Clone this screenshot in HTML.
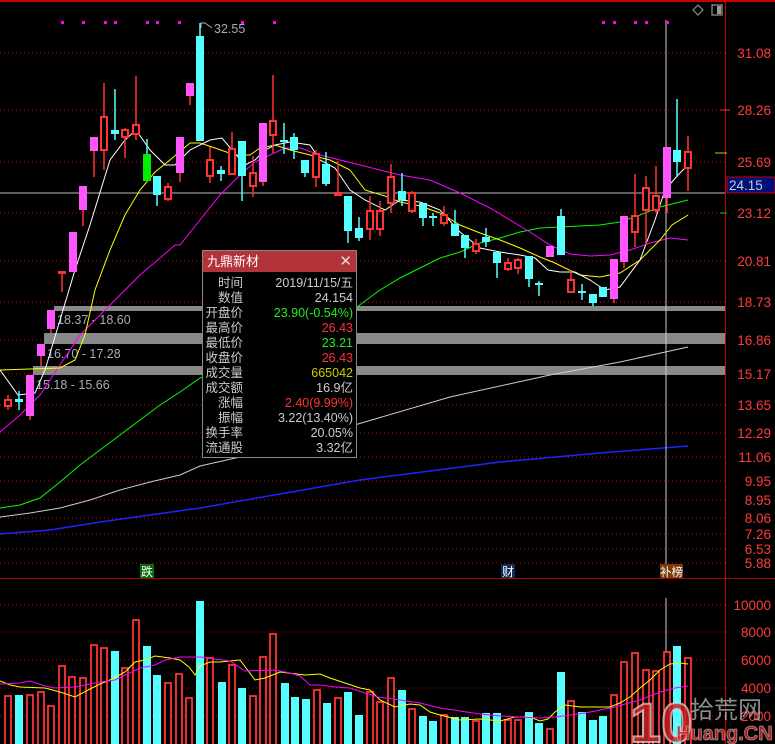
<!DOCTYPE html>
<html><head><meta charset="utf-8"><style>
html,body{margin:0;padding:0;background:#000;}
body{width:775px;height:744px;overflow:hidden;position:relative;font-family:"Liberation Sans","Noto Sans CJK SC",sans-serif;}
svg{position:absolute;left:0;top:0}
.tip{position:absolute;left:202px;top:250px;width:153px;height:206px;border:1px solid #888;background:#000;}
.tip .hd{height:21px;background:#b3333a;color:#fff;font-size:13px;line-height:21px;padding-left:4px;position:relative}
.tip .hd span{position:absolute;right:4px;top:0;color:#ddd;font-size:15px}
.row{height:15px;line-height:15px;font-size:12.5px;position:relative;color:#ccc}
.row .l{position:absolute;left:0;width:40px;text-align:right;}
.row .v{position:absolute;right:3px;}
</style></head><body>
<svg width="775" height="744" xmlns="http://www.w3.org/2000/svg">
<rect x="0" y="0" width="775" height="2" fill="#c00"/>
<g stroke="#c00" stroke-width="1" stroke-dasharray="1,3">
<line x1="0" y1="53" x2="725" y2="53"/><line x1="0" y1="110" x2="725" y2="110"/><line x1="0" y1="162" x2="725" y2="162"/><line x1="0" y1="213" x2="725" y2="213"/><line x1="0" y1="261" x2="725" y2="261"/><line x1="0" y1="302" x2="725" y2="302"/><line x1="0" y1="340" x2="725" y2="340"/><line x1="0" y1="374" x2="725" y2="374"/><line x1="0" y1="405" x2="725" y2="405"/><line x1="0" y1="433" x2="725" y2="433"/><line x1="0" y1="457" x2="725" y2="457"/><line x1="0" y1="481" x2="725" y2="481"/><line x1="0" y1="500" x2="725" y2="500"/><line x1="0" y1="518" x2="725" y2="518"/><line x1="0" y1="534" x2="725" y2="534"/><line x1="0" y1="549" x2="725" y2="549"/><line x1="0" y1="563" x2="725" y2="563"/>
<line x1="0" y1="605" x2="725" y2="605"/><line x1="0" y1="632" x2="725" y2="632"/><line x1="0" y1="660" x2="725" y2="660"/><line x1="0" y1="688" x2="725" y2="688"/><line x1="0" y1="716" x2="725" y2="716"/>
</g>
<rect x="54" y="306" width="671" height="5" fill="#888"/>
<rect x="44" y="333" width="681" height="11" fill="#888"/>
<rect x="33" y="366" width="692" height="9" fill="#888"/>
<g font-size="12.5" fill="#aab">
<text x="57" y="324">18.37 - 18.60</text>
<text x="47" y="358">16.70 - 17.28</text>
<text x="36" y="389">15.18 - 15.66</text>
</g>
<polyline fill="none" stroke="#0f0" stroke-width="1" points="0,508 20,505 40,498 60,482 80,465 100,450 120,435 140,420 160,405 180,392 200,378 260,350 357,307 380,290 400,278 420,268 440,258 460,252 480,243 500,238 520,232 540,228 560,227 580,226 600,225 620,222 640,215 660,207 688,200"/>
<polyline fill="none" stroke="#ccc" stroke-width="1" points="0,517 30,513 60,508 90,500 120,490 150,482 180,475 200,466 280,448 358,424 450,397 550,375 620,362 688,347"/>
<polyline fill="none" stroke="#22f" stroke-width="1.5" points="0,534 50,530 100,522 150,515 200,508 360,480 500,462 600,453 688,446"/>
<line x1="0" y1="193" x2="725" y2="193" stroke="#bbb" stroke-width="1"/>
<polyline fill="none" stroke="#f0f" stroke-width="1" points="0,432 20,415 40,395 60,365 80,335 100,315 120,295 140,275 160,258 175,245 180,245 200,220 220,195 240,175 255,162 270,155 285,148 300,148 320,155 340,160 360,165 400,175 430,180 460,193 490,208 510,220 530,232 550,245 570,254 590,256 610,255 630,250 650,243 670,238 688,240"/>
<polyline fill="none" stroke="#ff0" stroke-width="1" points="0,370 60,368 75,360 85,335 95,290 110,250 125,215 140,190 155,172 170,160 190,143 200,143 215,148 235,155 250,155 260,148 275,145 290,150 310,155 330,160 350,170 365,190 385,196 400,202 420,206 440,213 460,225 480,233 500,240 520,248 540,257 555,263 565,268 580,275 600,277 620,273 640,260 660,240 672,225 688,215"/>
<polyline fill="none" stroke="#fff" stroke-width="1" points="0,370 18,395 35,393 45,370 60,320 75,270 90,225 110,160 125,140 136,130 150,150 165,165 175,165 190,150 210,140 222,138 232,150 245,165 255,160 265,150 275,145 290,142 310,145 320,160 335,168 350,190 365,200 385,210 400,200 420,202 440,210 460,232 480,248 500,252 520,255 535,258 548,270 560,272 575,272 590,280 605,290 620,287 640,260 655,220 665,190 678,175 688,165"/>
<line x1="666" y1="20" x2="666" y2="578" stroke="#ccc"/>
<line x1="666" y1="598" x2="666" y2="744" stroke="#ccc"/>
<g stroke-width="1.5">
<g stroke="#f33">
<line x1="8" y1="395" x2="8" y2="410"/><line x1="62" y1="272" x2="62" y2="292"/><line x1="104" y1="83" x2="104" y2="170"/><line x1="125" y1="128" x2="125" y2="158"/><line x1="136" y1="76" x2="136" y2="140"/><line x1="168" y1="183" x2="168" y2="201"/><line x1="210" y1="147" x2="210" y2="183"/><line x1="232" y1="132" x2="232" y2="175"/><line x1="253" y1="156" x2="253" y2="197"/><line x1="273" y1="75" x2="273" y2="153"/><line x1="316" y1="150" x2="316" y2="187"/><line x1="338" y1="161" x2="338" y2="196"/><line x1="370" y1="196" x2="370" y2="240"/><line x1="380" y1="201" x2="380" y2="236"/><line x1="391" y1="164" x2="391" y2="213"/><line x1="412" y1="191" x2="412" y2="213"/><line x1="444" y1="206" x2="444" y2="226"/><line x1="476" y1="239" x2="476" y2="254"/><line x1="508" y1="258" x2="508" y2="271"/><line x1="518" y1="258" x2="518" y2="274"/><line x1="571" y1="270" x2="571" y2="293"/><line x1="635" y1="174" x2="635" y2="247"/><line x1="646" y1="176" x2="646" y2="245"/><line x1="656" y1="166" x2="656" y2="213"/><line x1="688" y1="136" x2="688" y2="191"/>
<line x1="30" y1="375" x2="30" y2="420"/><line x1="41" y1="344" x2="41" y2="366"/><line x1="51" y1="310" x2="51" y2="333"/><line x1="83" y1="186" x2="83" y2="226"/><line x1="94" y1="137" x2="94" y2="177"/><line x1="180" y1="137" x2="180" y2="182"/><line x1="190" y1="83" x2="190" y2="105"/><line x1="263" y1="123" x2="263" y2="186"/><line x1="614" y1="259" x2="614" y2="303"/><line x1="624" y1="216" x2="624" y2="268"/><line x1="667" y1="147" x2="667" y2="213"/>
</g>
<g stroke="#5ff">
<line x1="19" y1="391" x2="19" y2="410"/><line x1="115" y1="89" x2="115" y2="140"/><line x1="147" y1="139" x2="147" y2="181"/><line x1="157" y1="176" x2="157" y2="206"/><line x1="200" y1="23" x2="200" y2="141"/><line x1="221" y1="166" x2="221" y2="181"/><line x1="242" y1="141" x2="242" y2="201"/><line x1="284" y1="123" x2="284" y2="154"/><line x1="294" y1="133" x2="294" y2="159"/><line x1="305" y1="160" x2="305" y2="177"/><line x1="326" y1="152" x2="326" y2="186"/><line x1="348" y1="196" x2="348" y2="243"/><line x1="359" y1="217" x2="359" y2="241"/><line x1="402" y1="173" x2="402" y2="206"/><line x1="423" y1="203" x2="423" y2="226"/><line x1="433" y1="213" x2="433" y2="226"/><line x1="455" y1="210" x2="455" y2="236"/><line x1="465" y1="235" x2="465" y2="258"/><line x1="486" y1="228" x2="486" y2="247"/><line x1="497" y1="252" x2="497" y2="278"/><line x1="529" y1="256" x2="529" y2="287"/><line x1="539" y1="281" x2="539" y2="296"/><line x1="561" y1="209" x2="561" y2="255"/><line x1="582" y1="284" x2="582" y2="300"/><line x1="593" y1="294" x2="593" y2="306"/><line x1="677" y1="99" x2="677" y2="177"/>
</g>
</g>
<g fill="#000" stroke="#f33" stroke-width="2">
<rect x="5" y="400" width="6" height="6"/><rect x="101" y="117" width="6" height="33"/><rect x="122" y="130" width="6" height="7"/><rect x="133" y="125" width="6" height="9"/><rect x="165" y="187" width="6" height="12"/><rect x="207" y="160" width="6" height="16"/><rect x="229" y="149" width="6" height="25"/><rect x="250" y="173" width="6" height="13"/><rect x="270" y="121" width="6" height="14"/><rect x="313" y="154" width="6" height="23"/><rect x="367" y="211" width="6" height="18"/><rect x="377" y="211" width="6" height="18"/><rect x="388" y="177" width="6" height="26"/><rect x="409" y="193" width="6" height="18"/><rect x="441" y="215" width="6" height="8"/><rect x="473" y="244" width="6" height="7"/><rect x="505" y="263" width="6" height="6"/><rect x="515" y="260" width="6" height="8"/><rect x="568" y="280" width="6" height="12"/><rect x="632" y="216" width="6" height="16"/><rect x="643" y="188" width="6" height="22"/><rect x="653" y="196" width="6" height="14"/><rect x="685" y="152" width="6" height="16"/>
</g>
<g fill="#f33"><rect x="58" y="271" width="8" height="3"/><rect x="334" y="192" width="8" height="4"/></g>
<g fill="#f5f">
<rect x="26" y="375" width="8" height="41"/><rect x="37" y="344" width="8" height="12"/><rect x="47" y="310" width="8" height="19"/><rect x="69" y="232" width="8" height="40"/><rect x="79" y="186" width="8" height="24"/><rect x="90" y="137" width="8" height="14"/><rect x="176" y="137" width="8" height="36"/><rect x="186" y="83" width="8" height="13"/><rect x="259" y="123" width="8" height="59"/><rect x="546" y="246" width="8" height="11"/><rect x="610" y="259" width="8" height="40"/><rect x="620" y="216" width="8" height="46"/><rect x="663" y="147" width="8" height="51"/>
</g>
<rect x="143" y="154" width="8" height="27" fill="#0e0"/>
<g fill="#5ff">
<rect x="15" y="399" width="8" height="3"/><rect x="111" y="130" width="8" height="4"/><rect x="153" y="176" width="8" height="19"/><rect x="196" y="36" width="8" height="105"/><rect x="217" y="170" width="8" height="4"/><rect x="238" y="141" width="8" height="35"/><rect x="280" y="140" width="8" height="2"/><rect x="290" y="137" width="8" height="13"/><rect x="301" y="160" width="8" height="13"/><rect x="322" y="164" width="8" height="20"/><rect x="344" y="196" width="8" height="35"/><rect x="355" y="228" width="8" height="10"/><rect x="398" y="191" width="8" height="9"/><rect x="419" y="203" width="8" height="15"/><rect x="429" y="216" width="8" height="2"/><rect x="451" y="224" width="8" height="12"/><rect x="461" y="235" width="8" height="13"/><rect x="482" y="237" width="8" height="5"/><rect x="493" y="252" width="8" height="11"/><rect x="525" y="256" width="8" height="23"/><rect x="535" y="283" width="8" height="2"/><rect x="557" y="216" width="8" height="39"/><rect x="578" y="291" width="8" height="2"/><rect x="589" y="294" width="8" height="9"/><rect x="599" y="287" width="8" height="10"/><rect x="673" y="150" width="8" height="12"/>
</g>
<polyline points="201,28 201,23 205,23 212,28" fill="none" stroke="#aab" stroke-width="1"/>
<text x="214" y="33" font-size="12.5" fill="#aab">32.55</text>
<g fill="#f0f"><rect x="61" y="21" width="3" height="3"/><rect x="82" y="21" width="3" height="3"/><rect x="104" y="21" width="3" height="3"/><rect x="114" y="21" width="3" height="3"/><rect x="146" y="21" width="3" height="3"/><rect x="156" y="21" width="3" height="3"/><rect x="178" y="21" width="3" height="3"/><rect x="241" y="21" width="3" height="3"/><rect x="273" y="21" width="3" height="3"/><rect x="602" y="21" width="3" height="3"/><rect x="613" y="21" width="3" height="3"/><rect x="634" y="21" width="3" height="3"/><rect x="645" y="21" width="3" height="3"/><rect x="666" y="21" width="3" height="3"/></g>
<polygon points="698,5 703,10 698,15 693,10" fill="none" stroke="#999"/>
<rect x="712" y="5" width="10" height="10" fill="none" stroke="#999" stroke-width="1.2"/><rect x="717" y="6" width="4" height="8" fill="#999"/>
<line x1="725.5" y1="0" x2="725.5" y2="744" stroke="#c00"/>
<line x1="0" y1="578.5" x2="775" y2="578.5" stroke="#a00"/>
<g stroke="#f33"><line x1="720" y1="110" x2="730" y2="110"/><line x1="715" y1="153" x2="727" y2="153" stroke="#cc0"/><line x1="720" y1="213" x2="727" y2="213" stroke="#0c0"/></g>
<g font-size="13.5" fill="#ff3b3b" text-anchor="end">
<text x="771" y="58">31.08</text><text x="771" y="115">28.26</text><text x="771" y="167">25.69</text><text x="771" y="218">23.12</text><text x="771" y="266">20.81</text><text x="771" y="307">18.73</text><text x="771" y="345">16.86</text><text x="771" y="379">15.17</text><text x="771" y="410">13.65</text><text x="771" y="438">12.29</text><text x="771" y="462">11.06</text><text x="771" y="486">9.95</text><text x="771" y="505">8.95</text><text x="771" y="523">8.06</text><text x="771" y="539">7.26</text><text x="771" y="554">6.53</text><text x="771" y="568">5.88</text>
<text x="771" y="610">10000</text><text x="771" y="637">8000</text><text x="771" y="665">6000</text><text x="771" y="693">4000</text><text x="771" y="721">2000</text>
</g>
<rect x="727" y="177" width="48" height="16" fill="#00107a" stroke="#c00"/>
<text x="729" y="190" font-size="13.5" fill="#ccc">24.15</text>
<rect x="140" y="564" width="14" height="14" fill="#0a6a0a"/><text x="141" y="576" font-size="12" fill="#fff">跌</text>
<rect x="501" y="564" width="14" height="14" fill="#0c2a5a"/><text x="502" y="576" font-size="12" fill="#fff">财</text>
<rect x="660" y="564" width="23" height="14" fill="#7a3a08"/><text x="660" y="576" font-size="11.5" fill="#fff">补榜</text>
<g fill="#000" stroke="#f33" stroke-width="1.8">
<rect x="5" y="696" width="6" height="60"/><rect x="27" y="695" width="6" height="60"/><rect x="38" y="692" width="6" height="60"/><rect x="48" y="706" width="6" height="60"/><rect x="59" y="666" width="6" height="90"/><rect x="69" y="677" width="6" height="80"/><rect x="80" y="678" width="6" height="80"/><rect x="91" y="645" width="6" height="110"/><rect x="101" y="648" width="6" height="110"/><rect x="122" y="668" width="6" height="90"/><rect x="133" y="620" width="6" height="130"/><rect x="165" y="683" width="6" height="70"/><rect x="176" y="674" width="6" height="80"/><rect x="186" y="698" width="6" height="60"/><rect x="207" y="658" width="6" height="90"/><rect x="229" y="665" width="6" height="90"/><rect x="250" y="696" width="6" height="60"/><rect x="260" y="657" width="6" height="90"/><rect x="270" y="634" width="6" height="120"/><rect x="314" y="690" width="6" height="60"/><rect x="335" y="698" width="6" height="60"/><rect x="367" y="692" width="6" height="60"/><rect x="377" y="702" width="6" height="60"/><rect x="388" y="678" width="6" height="70"/><rect x="409" y="709" width="6" height="40"/><rect x="441" y="715" width="6" height="40"/><rect x="473" y="721" width="6" height="30"/><rect x="505" y="720" width="6" height="30"/><rect x="515" y="720" width="6" height="30"/><rect x="547" y="729" width="6" height="30"/><rect x="568" y="701" width="6" height="50"/><rect x="611" y="695" width="6" height="60"/><rect x="621" y="662" width="6" height="90"/><rect x="632" y="653" width="6" height="100"/><rect x="643" y="670" width="6" height="80"/><rect x="653" y="671" width="6" height="80"/><rect x="664" y="652" width="6" height="100"/><rect x="685" y="658" width="6" height="90"/>
</g>
<g fill="#5ff">
<rect x="15" y="695" width="8" height="50"/><rect x="111" y="651" width="8" height="93"/><rect x="143" y="646" width="8" height="98"/><rect x="153" y="675" width="8" height="69"/><rect x="196" y="601" width="8" height="143"/><rect x="218" y="682" width="8" height="62"/><rect x="238" y="688" width="8" height="56"/><rect x="281" y="683" width="8" height="61"/><rect x="291" y="697" width="8" height="47"/><rect x="302" y="699" width="8" height="45"/><rect x="323" y="703" width="8" height="41"/><rect x="344" y="692" width="8" height="52"/><rect x="355" y="715" width="8" height="29"/><rect x="398" y="690" width="8" height="54"/><rect x="419" y="716" width="8" height="28"/><rect x="429" y="721" width="8" height="23"/><rect x="451" y="717" width="8" height="27"/><rect x="461" y="717" width="8" height="27"/><rect x="482" y="713" width="8" height="31"/><rect x="493" y="713" width="8" height="31"/><rect x="525" y="712" width="8" height="32"/><rect x="535" y="723" width="8" height="21"/><rect x="557" y="672" width="8" height="72"/><rect x="578" y="712" width="8" height="32"/><rect x="589" y="720" width="8" height="24"/><rect x="599" y="716" width="8" height="28"/><rect x="673" y="646" width="8" height="98"/>
</g>
<polyline fill="none" stroke="#ff0" stroke-width="1" points="0,681 10,685 20,687 45,688 60,692 75,697 90,689 100,684 110,680 125,672 135,662 145,660 155,656 170,658 180,660 189,667 195,675 200,666 210,662 220,662 240,660 255,680 265,678 280,672 305,675 320,674 330,678 345,683 360,688 370,690 380,700 395,707 410,704 420,705 430,712 440,715 460,720 480,719 500,721 515,717 530,717 540,721 548,719 555,712 565,705 580,707 610,707 620,703 630,697 640,688 650,680 660,670 670,664 680,663 688,664"/>
<polyline fill="none" stroke="#f0f" stroke-width="1" points="0,684 20,683 30,681 45,686 55,688 75,687 90,684 100,682 115,680 125,675 140,668 155,665 165,660 180,657 200,657 230,661 245,671 275,670 290,673 300,676 310,685 320,685 335,687 350,688 365,693 378,697 400,700 420,703 440,708 460,711 480,714 500,716 520,717 540,718 555,717 570,715 585,713 600,710 615,707 625,704 640,700 660,692 675,688 688,686"/>
<text x="630" y="742" font-size="56" font-weight="bold" fill="#c22" fill-opacity="0.85" stroke="#ddd" stroke-width="2" stroke-opacity="0.7">10</text>
<text x="690" y="718" font-size="24" fill="#bbb" fill-opacity="0.75">拾荒网</text>
<text x="676" y="740" font-size="20" font-weight="bold" fill="#c22" fill-opacity="0.85" stroke="#ddd" stroke-width="0.8" stroke-opacity="0.6">Huang.CN</text>
</svg>
<div class="tip">
<div class="hd">九鼎新材<span>✕</span></div>
<div style="height:4px"></div>
<div class="row"><span class="l">时间</span><span class="v">2019/11/15/五</span></div>
<div class="row"><span class="l">数值</span><span class="v">24.154</span></div>
<div class="row"><span class="l">开盘价</span><span class="v" style="color:#2e2">23.90(-0.54%)</span></div>
<div class="row"><span class="l">最高价</span><span class="v" style="color:#f33">26.43</span></div>
<div class="row"><span class="l">最低价</span><span class="v" style="color:#2e2">23.21</span></div>
<div class="row"><span class="l">收盘价</span><span class="v" style="color:#f33">26.43</span></div>
<div class="row"><span class="l">成交量</span><span class="v" style="color:#cc0">665042</span></div>
<div class="row"><span class="l">成交额</span><span class="v">16.9亿</span></div>
<div class="row"><span class="l">涨幅</span><span class="v" style="color:#f33">2.40(9.99%)</span></div>
<div class="row"><span class="l">振幅</span><span class="v">3.22(13.40%)</span></div>
<div class="row"><span class="l">换手率</span><span class="v">20.05%</span></div>
<div class="row"><span class="l">流通股</span><span class="v">3.32亿</span></div>
</div>
</body></html>
